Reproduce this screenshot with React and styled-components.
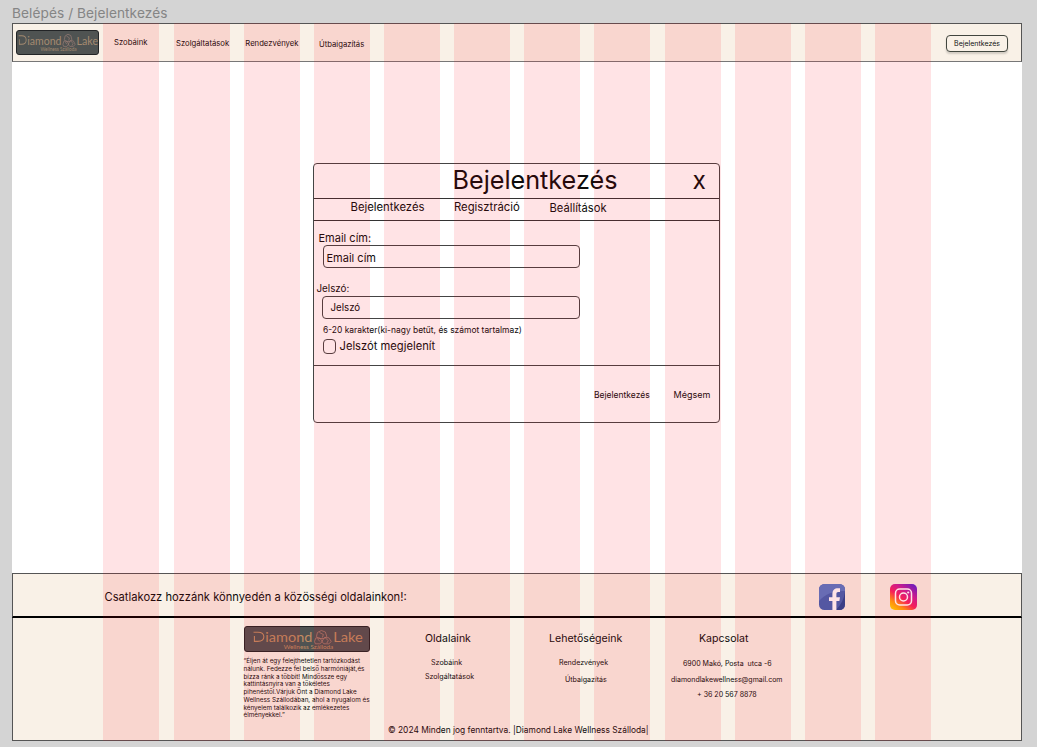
import React from "react";
import styled, { createGlobalStyle } from "styled-components";

const GlobalStyle = createGlobalStyle`
  * { box-sizing: border-box; }
  body { margin: 0; background: #d4d4d4; font-family: Inter, "Liberation Sans", sans-serif; color: #0c0c0c; }
`;

const Canvas = styled.div`
  width: 1037px;
  height: 747px;
  padding: 3px 0 0 12px;
  overflow: hidden;
`;
const FrameTitle = styled.div`
  height: 20px;
  line-height: 20px;
  font-size: 13.7px;
  letter-spacing: 0.06px;
  color: #858585;
  white-space: nowrap;
`;
const Frame = styled.div`
  position: relative;
  width: 1010px;
  height: 718px;
  background: #fff;
  display: flex;
  flex-direction: column;
`;
const ColumnOverlay = styled.div`
  position: absolute;
  inset: 0;
  padding-left: 91.4px;
  display: grid;
  grid-template-columns: repeat(12, 56px);
  column-gap: 14.15px;
  pointer-events: none;
`;
const GridColumn = styled.div`
  background: rgba(255, 0, 20, 0.108);
`;

const Text = styled.span`
  display: block;
  white-space: nowrap;
  font-size: ${(p) => p.$size}px;
  line-height: ${(p) => p.$lh || 16}px;
  margin-top: ${(p) => p.$mt || 0}px;
  margin-left: ${(p) => p.$ml || 0}px;
`;

const Header = styled.header`
  height: 39px;
  flex: none;
  border: 1px solid #555;
  border-bottom-color: #777;
  background: #f9f1e7;
  display: flex;
  justify-content: space-between;
`;
const Nav = styled.nav`
  display: grid;
  grid-template-columns: 101px 62px 69.3px 73.7px 60px;
  align-items: start;
`;
const LogoPlate = styled.div`
  width: ${(p) => p.$w}px;
  height: ${(p) => p.$h}px;
  margin: ${(p) => p.$m};
  border: 1px solid #222426;
  border-radius: 3px;
  background: #4f5352;
  svg { display: block; }
`;
const LoginButton = styled.button`
  width: 62px;
  height: 17px;
  margin: 11px 13px 0 0;
  padding: 0;
  border: 1px solid #42463e;
  border-radius: 4px;
  background: #f9f1e7;
  box-shadow: 0 2px 2px rgba(0, 0, 0, 0.16);
  font: 7px/15px Inter, sans-serif;
  color: #111;
`;

const Main = styled.main`
  height: 511px;
  flex: none;
  padding: 101px 0 0 301px;
`;
const Dialog = styled.section`
  width: 407px;
  height: 260px;
  border: 1px solid #444;
  border-radius: 4px;
`;
const DialogHeader = styled.div`
  height: 35px;
  display: grid;
  grid-template-columns: 378.5px 20px;
  border-bottom: 1px solid #333;
`;
const Tabs = styled.div`
  height: 22px;
  display: grid;
  grid-template-columns: 103.5px 95.5px 100px;
  border-bottom: 1px solid #333;
`;
const Form = styled.div`
  height: 145px;
  display: flow-root;
  border-bottom: 1px solid #444;
`;
const Field = styled.div`
  width: ${(p) => p.$w}px;
  height: 23px;
  margin-left: ${(p) => p.$ml}px;
  border: 1px solid #444;
  border-radius: 4px;
`;
const CheckRow = styled.div`
  display: flex;
  margin: 0 0 0 9px;
`;
const CheckBox = styled.div`
  width: 13px;
  height: 15px;
  margin-top: 2px;
  border: 1px solid #444;
  border-radius: 4px;
`;
const Actions = styled.div`
  display: grid;
  grid-template-columns: 79.5px 50px;
  padding: 21px 0 0 280px;
`;

const Social = styled.section`
  height: 45px;
  flex: none;
  display: grid;
  grid-template-columns: 714px 71px 60px;
  border: 1px solid #555;
  border-bottom: 2px solid #000;
  background: #f9f1e7;
  svg { display: block; }
`;
const Footer = styled.footer`
  flex: 1;
  border: 1px solid #555;
  border-top: 0;
  background: #f9f1e7;
  display: grid;
  grid-template-columns: 230.5px 181.5px 125px 121px 160px;
  grid-template-rows: 104px 18px;
`;
const FooterColumn = styled.div`
  display: flow-root;
`;
const About = styled.p`
  margin: 6px 0 0;
  font-size: 6.3px;
  line-height: 7.75px;
  white-space: nowrap;
`;
const Copyright = styled.div`
  grid-column: 1 / -1;
  padding-left: 375px;
`;

const LogoArt = ({ width, height, color, stroke, crop = 0 }) => (
  <svg width={width} height={height} viewBox={`${crop} 0 ${125 - crop * 2} 24`} preserveAspectRatio="none">
    <path d="M8.6 5.2H13C17 5.2 19 7 19 9.8S17 14.4 13 14.4H9.5V9" fill="none" stroke={color} strokeWidth="1.1" />
    <g fill={color} fontFamily="Lato, sans-serif">
      <text x="20.5" y="14.8" fontSize="13.4" textLength="47.5" lengthAdjust="spacingAndGlyphs">iamond</text>
      <text x="89" y="14.8" fontSize="13.4" textLength="29.8" lengthAdjust="spacingAndGlyphs">Lake</text>
      <text x="39" y="22.2" fontSize="5.3" textLength="50" lengthAdjust="spacingAndGlyphs">Wellness Szálloda</text>
    </g>
    <g fill="none" stroke={stroke} strokeWidth="0.75">
      <path d="M72 9.5 73 5.5 77 3.5 81 5 82.5 9.5 79.5 11.5 74.5 11.5ZM75 5.5 79 7.5 78 10.5" />
      <path d="M70 14.5 71.5 10.8 75.5 11 78 14.5 75.5 16.8 71 16.8ZM73 11.5 75.5 14.5" />
      <path d="M77.5 14.5 80 10.5 84.5 10.8 87 14.5 84.5 16.8 79.5 16.8ZM81 11 84 13.5 82.5 16" />
    </g>
  </svg>
);

const FacebookIcon = () => (
  <svg width="26" height="26" viewBox="0 0 26 26">
    <defs>
      <clipPath id="fb"><rect width="26" height="26" rx="5.5" /></clipPath>
    </defs>
    <g clipPath="url(#fb)">
      <rect width="26" height="26" fill="#3f62b4" />
      <path d="M0 0H26V7C15 6.5 6 10 0 17Z" fill="#567ac8" />
      <path d="M26 8V26H17C22 21 25 15 26 8Z" fill="#234695" />
      <path d="M13.4 26V17H10V13.2H13.4V10.2C13.4 6.3 15.5 4.3 19 4.3H21V8H19.2C17.9 8 17.4 8.7 17.4 10V13.2H21L20.4 17H17.4V26Z" fill="#fff" />
    </g>
  </svg>
);

const InstagramIcon = () => (
  <svg width="27" height="26" viewBox="0 0 27 26">
    <defs>
      <linearGradient id="ig" x1="0.1" y1="1" x2="0.85" y2="0">
        <stop offset="0" stopColor="#ffd800" />
        <stop offset="0.22" stopColor="#ff9a12" />
        <stop offset="0.45" stopColor="#f62462" />
        <stop offset="0.7" stopColor="#c71f9b" />
        <stop offset="1" stopColor="#6020d0" />
      </linearGradient>
    </defs>
    <rect width="27" height="26" rx="5" fill="url(#ig)" />
    <g fill="none" stroke="#fff" strokeWidth="1.5">
      <rect x="5.5" y="5" width="16" height="16" rx="4.2" />
      <circle cx="13.5" cy="13" r="4" />
    </g>
    <circle cx="18.2" cy="8.5" r="1.1" fill="#fff" />
  </svg>
);

const IconCell = styled.div`
  padding: 10px 0 0 92px;
`;

const aboutLines = [
  "“Éljen át egy felejthetetlen tartózkodást",
  "nálunk. Fedezze fel belső harmóniáját,és",
  "bízza ránk a többit! Mindössze egy",
  "kattintásnyira van a tökéletes",
  "pihenéstől.Várjuk Önt a Diamond Lake",
  "Wellness Szállodában, ahol a nyugalom és",
  "kényelem találkozik az emlékezetes",
  "élményekkel.”",
];

export default function App() {
  return (
    <Canvas>
      <GlobalStyle />
      <FrameTitle>Belépés / Bejelentkezés</FrameTitle>
      <Frame>
        <Header>
          <Nav>
            <LogoPlate $w={83} $h={25} $m="6px 0 0 3px">
              <LogoArt width={81} height={22} color="#a48a70" stroke="#a08078" crop={6.3} />
            </LogoPlate>
            <Text $size={7.7} $mt={11}>Szobáink</Text>
            <Text $size={7.7} $mt={11.6}>Szolgáltatások</Text>
            <Text $size={7.7} $mt={12.4}>Rendezvények</Text>
            <Text $size={7.7} $mt={13}>Útbaigazítás</Text>
          </Nav>
          <LoginButton>Bejelentkezés</LoginButton>
        </Header>
        <Main>
          <Dialog>
            <DialogHeader>
              <Text $size={25.2} $lh={32} $ml={138.5}>Bejelentkezés</Text>
              <Text $size={24.5} $lh={32}>x</Text>
            </DialogHeader>
            <Tabs>
              <Text $size={11.3} $lh={17} $ml={36.5}>Bejelentkezés</Text>
              <Text $size={11.3} $lh={17} $ml={36.5}>Regisztráció</Text>
              <Text $size={11.2} $lh={18} $ml={36.5}>Beállítások</Text>
            </Tabs>
            <Form>
              <Text $size={11} $lh={13} $mt={11} $ml={4.5}>Email cím:</Text>
              <Field $w={257} $ml={9}>
                <Text $size={11} $lh={24} $ml={2.5}>Email cím</Text>
              </Field>
              <Text $size={9.8} $lh={14} $mt={14} $ml={2.5}>Jelszó:</Text>
              <Field $w={258} $ml={8}>
                <Text $size={9.7} $lh={21} $ml={7.5}>Jelszó</Text>
              </Field>
              <Text $size={8.45} $lh={14} $mt={4} $ml={9}>6-20 karakter(ki-nagy betűt, és számot tartalmaz)</Text>
              <CheckRow>
                <CheckBox />
                <Text $size={11.2} $lh={19} $ml={3.5}>Jelszót megjelenít</Text>
              </CheckRow>
            </Form>
            <Actions>
              <Text $size={8.5}>Bejelentkezés</Text>
              <Text $size={9}>Mégsem</Text>
            </Actions>
          </Dialog>
        </Main>
        <Social>
          <Text $size={11.2} $lh={22} $mt={12} $ml={91.5}>Csatlakozz hozzánk könnyedén a közösségi oldalainkon!:</Text>
          <IconCell><FacebookIcon /></IconCell>
          <IconCell><InstagramIcon /></IconCell>
        </Social>
        <Footer>
          <div />
          <FooterColumn>
            <LogoPlate $w={126.5} $h={26} $m="8px 0 0">
              <LogoArt width={124} height={24} color="#c08b62" stroke="#b4806f" />
            </LogoPlate>
            <About>
              {aboutLines.map((line) => (
                <React.Fragment key={line}>{line}<br /></React.Fragment>
              ))}
            </About>
          </FooterColumn>
          <FooterColumn>
            <Text $size={10.5} $mt={13} $ml={0}>Oldalaink</Text>
            <Text $size={7.2} $lh={14} $mt={8.5} $ml={6}>Szobáink</Text>
            <Text $size={7.1} $lh={14} $ml={0}>Szolgáltatások</Text>
          </FooterColumn>
          <FooterColumn>
            <Text $size={10.6} $mt={13} $ml={-1}>Lehetőségeink</Text>
            <Text $size={7.1} $lh={14} $mt={8.5} $ml={9}>Rendezvények</Text>
            <Text $size={7.1} $lh={14} $mt={3} $ml={15}>Útbaigazítás</Text>
          </FooterColumn>
          <FooterColumn>
            <Text $size={10.6} $mt={13} $ml={28}>Kapcsolat</Text>
            <Text $size={7.05} $lh={15.5} $mt={9} $ml={12}>6900 Makó, Posta &nbsp;utca -6</Text>
            <Text $size={7} $lh={15.5} $ml={0}>diamondlakewellness@gmail.com</Text>
            <Text $size={7.05} $lh={15.5} $ml={26}>+ 36 20 567 8878</Text>
          </FooterColumn>
          <Copyright>
            <Text $size={8.4}>© 2024 Minden jog fenntartva. |Diamond Lake Wellness Szálloda|</Text>
          </Copyright>
        </Footer>
        <ColumnOverlay>
          {Array.from({ length: 12 }, (_, i) => <GridColumn key={i} />)}
        </ColumnOverlay>
      </Frame>
    </Canvas>
  );
}
